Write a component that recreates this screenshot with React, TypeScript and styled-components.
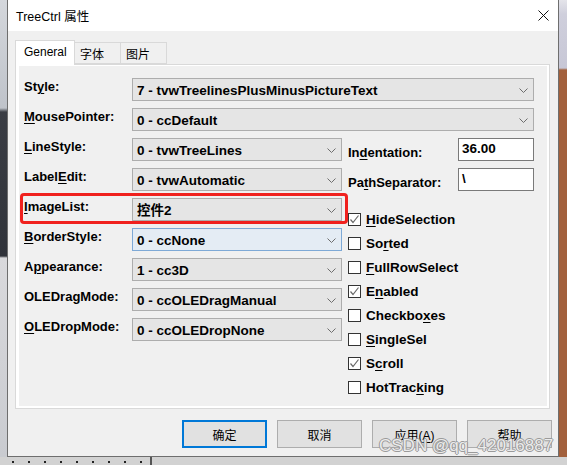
import styled, { createGlobalStyle } from "styled-components";

const GlobalStyle = createGlobalStyle`
    html, body {
        margin: 0;
        padding: 0;
    }
    body {
        width: 567px;
        height: 465px;
        overflow: hidden;
        font-family: "Liberation Sans", Arial, "Noto Sans CJK SC", sans-serif;
        color: #000;
    }
`;

const Desktop = styled.div`
    position: relative;
    width: 567px;
    height: 465px;
    display: grid;
    grid-template-columns: 7px 552px 8px;
    grid-template-rows: 457px 8px;
    background: #cfcfcf;
`;

const LeftStrip = styled.div`
    background: linear-gradient(
        to bottom,
        #d4d7dc 0,
        #bfc3ca 108px,
        #3a3d44 112px,
        #30333a 256px,
        #d9d9dc 258px,
        #c9cbd0 100%
    );
`;

const RightStrip = styled.div`
    background: linear-gradient(
        to bottom,
        #e4e4ea 0,
        #cfcfdc 14px,
        #c7c7d6 68px,
        #a2603c 70px,
        #a2603c 100%
    );
`;

const BottomStrip = styled.div`
    grid-column: 1 / 4;
    display: flex;
    background: #d2d2d2;
`;

const Dots = styled.div`
    width: 150px;
    background-image: radial-gradient(circle, #222 0.9px, transparent 1.3px);
    background-size: 16px 8px;
    background-position: 5px 1px;
`;

const Divider = styled.div`
    width: 2px;
    background: #555;
`;

const Window = styled.div`
    display: flex;
    flex-direction: column;
    border: 1px solid #6e6e6e;
    border-top: none;
    background: #f0f0f0;
`;

const TitleBar = styled.div`
    height: 31px;
    flex: none;
    display: flex;
    align-items: center;
    justify-content: space-between;
    padding: 0 9px 0 8px;
    background: #fff;
    font-family: "Liberation Sans", "Noto Sans CJK SC", sans-serif;
    font-size: 12.5px;
`;

const Body = styled.div`
    flex: 1;
    display: flex;
    flex-direction: column;
    padding: 9px 8px 10px 7px;
`;

const Tabs = styled.div`
    display: flex;
    align-items: flex-end;
    height: 24px;
    font-family: "Liberation Sans", "Noto Sans CJK SC", sans-serif;
    font-size: 12px;
`;

const Tab = styled.div<{ $active?: boolean; $w: number }>`
    box-sizing: border-box;
    width: ${(p) => p.$w}px;
    height: ${(p) => (p.$active ? 25 : 22)}px;
    margin-bottom: ${(p) => (p.$active ? -1 : 0)}px;
    position: relative;
    z-index: ${(p) => (p.$active ? 1 : 0)};
    display: flex;
    align-items: center;
    padding-left: ${(p) => (p.$active ? 8 : 5)}px;
    padding-bottom: ${(p) => (p.$active ? 2 : 0)}px;
    background: ${(p) => (p.$active ? "#fff" : "#f0f0f0")};
    border: 1px solid #d9d9d9;
    border-bottom: ${(p) => (p.$active ? "none" : "1px solid #d9d9d9")};
    border-left: ${(p) => (p.$active ? "1px solid #d9d9d9" : "none")};
`;

const Panel = styled.div`
    height: 345px;
    box-sizing: border-box;
    display: flex;
    border: 1px solid #d9d9d9;
    background: #fff;
    padding: 1px 2px 2px 3px;
`;

const Page = styled.div`
    position: relative;
    flex: 1;
    display: flex;
    flex-direction: column;
    gap: 7px;
    padding: 12px 12px 0 5px;
    background: #f0f0f0;
    font-weight: bold;
`;

const Row = styled.div`
    display: flex;
    height: 23px;
`;

const Label = styled.div<{ $w: number; $lh?: number }>`
    width: ${(p) => p.$w}px;
    flex: none;
    font-size: 13px;
    line-height: ${(p) => p.$lh ?? 17}px;
    white-space: nowrap;
`;

const Key = styled.span`
    text-decoration: underline;
    text-underline-offset: 2px;
    text-decoration-thickness: 1px;
`;

const Combo = styled.div<{ $w: number; $hover?: boolean }>`
    box-sizing: border-box;
    width: ${(p) => p.$w}px;
    height: 23px;
    display: flex;
    align-items: center;
    justify-content: space-between;
    padding: 0 5px 0 4px;
    border: 1px solid ${(p) => (p.$hover ? "#7ea9d6" : "#adadad")};
    background: ${(p) => (p.$hover ? "#e4ecf4" : "#e5e5e5")};
    font-size: 13.5px;
    line-height: 21px;
    padding-top: 2px;
    white-space: nowrap;
`;

const Columns = styled.div`
    display: flex;
    gap: 6px;
`;

const LeftCol = styled.div`
    width: 318px;
    display: flex;
    flex-direction: column;
    gap: 7px;
`;

const RightCol = styled.div`
    width: 186px;
    display: flex;
    flex-direction: column;
    gap: 7px;
`;

const TextBox = styled.div`
    box-sizing: border-box;
    width: 76px;
    height: 23px;
    padding: 0 3px;
    border: 1px solid #7a7a7a;
    background: #fff;
    font-size: 13.5px;
    line-height: 19px;
`;

const CheckList = styled.div`
    display: flex;
    flex-direction: column;
    margin-top: 9px;
`;

const CheckRow = styled.div`
    height: 24px;
    display: flex;
    align-items: center;
    gap: 5px;
    font-size: 13.5px;
`;

const Box = styled.div`
    box-sizing: border-box;
    width: 13px;
    height: 13px;
    border: 1px solid #333;
    background: #fff;
    display: flex;
    align-items: center;
    justify-content: center;
`;

const Highlight = styled.div`
    position: absolute;
    left: 1px;
    top: 127px;
    width: 328px;
    height: 31px;
    box-sizing: border-box;
    border: 3px solid #f0211e;
    border-radius: 4px;
    pointer-events: none;
`;

const Buttons = styled.div`
    display: flex;
    justify-content: flex-end;
    gap: 10px;
    margin-top: 11px;
    margin-right: -2px;
`;

const Button = styled.div<{ $default?: boolean }>`
    box-sizing: border-box;
    width: 85px;
    height: 28px;
    display: flex;
    align-items: center;
    justify-content: center;
    background: #e1e1e1;
    border: ${(p) => (p.$default ? "2px solid #0078d7" : "1px solid #adadad")};
    font-family: "Liberation Sans", "Noto Sans CJK SC", sans-serif;
    font-size: 12px;
`;

const Watermark = styled.div`
    position: absolute;
    left: 379px;
    top: 436px;
    font-family: "Liberation Sans", Arial, sans-serif;
    font-size: 17px;
    color: rgba(250, 250, 250, 0.85);
    text-shadow: 1px 0 0 #9a9a9a, -1px 0 0 #9a9a9a, 0 1px 0 #9a9a9a,
        0 -1px 0 #9a9a9a;
    pointer-events: none;
    white-space: nowrap;
`;

const Chevron = () => (
    <svg width='9' height='5' viewBox='0 0 9 5'>
        <path d='M0.5 0.5 L4.5 4.5 L8.5 0.5' fill='none' stroke='#6d6d6d' strokeWidth='1' />
    </svg>
);

const Check = () => (
    <svg width='11' height='11' viewBox='0 0 11 11'>
        <path d='M1.5 5.5 L4 8.5 L9.5 1.5' fill='none' stroke='#6a6a6a' strokeWidth='1.2' />
    </svg>
);

const mn = (text: string, idx: number) =>
    idx < 0 ? (
        text
    ) : (
        <>
            {text.slice(0, idx)}
            <Key>{text[idx]}</Key>
            {text.slice(idx + 1)}
        </>
    );

const wideFields = [
    { label: "Style:", key: 2, value: "7 - tvwTreelinesPlusMinusPictureText" },
    { label: "MousePointer:", key: 0, value: "0 - ccDefault" },
];

const leftFields = [
    { label: "LineStyle:", key: 0, value: "0 - tvwTreeLines" },
    { label: "LabelEdit:", key: 5, value: "0 - tvwAutomatic" },
    { label: "ImageList:", key: 0, value: "控件2" },
    { label: "BorderStyle:", key: 0, value: "0 - ccNone", hover: true },
    { label: "Appearance:", key: 1, value: "1 - cc3D" },
    { label: "OLEDragMode:", key: -1, value: "0 - ccOLEDragManual" },
    { label: "OLEDropMode:", key: 0, value: "0 - ccOLEDropNone" },
];

const checks = [
    { label: "HideSelection", key: 0, on: true },
    { label: "Sorted", key: 2, on: false },
    { label: "FullRowSelect", key: 0, on: false },
    { label: "Enabled", key: 1, on: true },
    { label: "Checkboxes", key: 7, on: false },
    { label: "SingleSel", key: 0, on: false },
    { label: "Scroll", key: 1, on: true },
    { label: "HotTracking", key: 7, on: false },
];

export default function App() {
    return (
        <>
            <GlobalStyle />
            <Desktop>
                <LeftStrip />
                <Window>
                    <TitleBar>
                        <span>TreeCtrl 属性</span>
                        <svg width='11' height='11' viewBox='0 0 11 11'>
                            <path d='M0.5 0.5 L10.5 10.5 M10.5 0.5 L0.5 10.5' stroke='#111' strokeWidth='1' />
                        </svg>
                    </TitleBar>
                    <Body>
                        <Tabs>
                            <Tab $active $w={60}>General</Tab>
                            <Tab $w={46}>字体</Tab>
                            <Tab $w={46}>图片</Tab>
                        </Tabs>
                        <Panel>
                            <Page>
                                {wideFields.map((f) => (
                                    <Row key={f.label}>
                                        <Label $w={108}>{mn(f.label, f.key)}</Label>
                                        <Combo $w={402}>
                                            <span>{f.value}</span>
                                            <Chevron />
                                        </Combo>
                                    </Row>
                                ))}
                                <Columns>
                                    <LeftCol>
                                        {leftFields.map((f) => (
                                            <Row key={f.label}>
                                                <Label $w={108}>{mn(f.label, f.key)}</Label>
                                                <Combo $w={210} $hover={f.hover}>
                                                    <span>{f.value}</span>
                                                    <Chevron />
                                                </Combo>
                                            </Row>
                                        ))}
                                    </LeftCol>
                                    <RightCol>
                                        <Row>
                                            <Label $w={110} $lh={29}>{mn("Indentation:", 2)}</Label>
                                            <TextBox>36.00</TextBox>
                                        </Row>
                                        <Row>
                                            <Label $w={110} $lh={29}>{mn("PathSeparator:", 2)}</Label>
                                            <TextBox>\</TextBox>
                                        </Row>
                                        <CheckList>
                                            {checks.map((c) => (
                                                <CheckRow key={c.label}>
                                                    <Box>{c.on && <Check />}</Box>
                                                    <span>{mn(c.label, c.key)}</span>
                                                </CheckRow>
                                            ))}
                                        </CheckList>
                                    </RightCol>
                                </Columns>
                                <Highlight />
                            </Page>
                        </Panel>
                        <Buttons>
                            <Button $default>确定</Button>
                            <Button>取消</Button>
                            <Button>
                                <span>
                                    应用(<Key>A</Key>)
                                </span>
                            </Button>
                            <Button>帮助</Button>
                        </Buttons>
                    </Body>
                </Window>
                <RightStrip />
                <BottomStrip>
                    <Dots />
                    <Divider />
                </BottomStrip>
                <Watermark>CSDN @qq_42016887</Watermark>
            </Desktop>
        </>
    );
}
